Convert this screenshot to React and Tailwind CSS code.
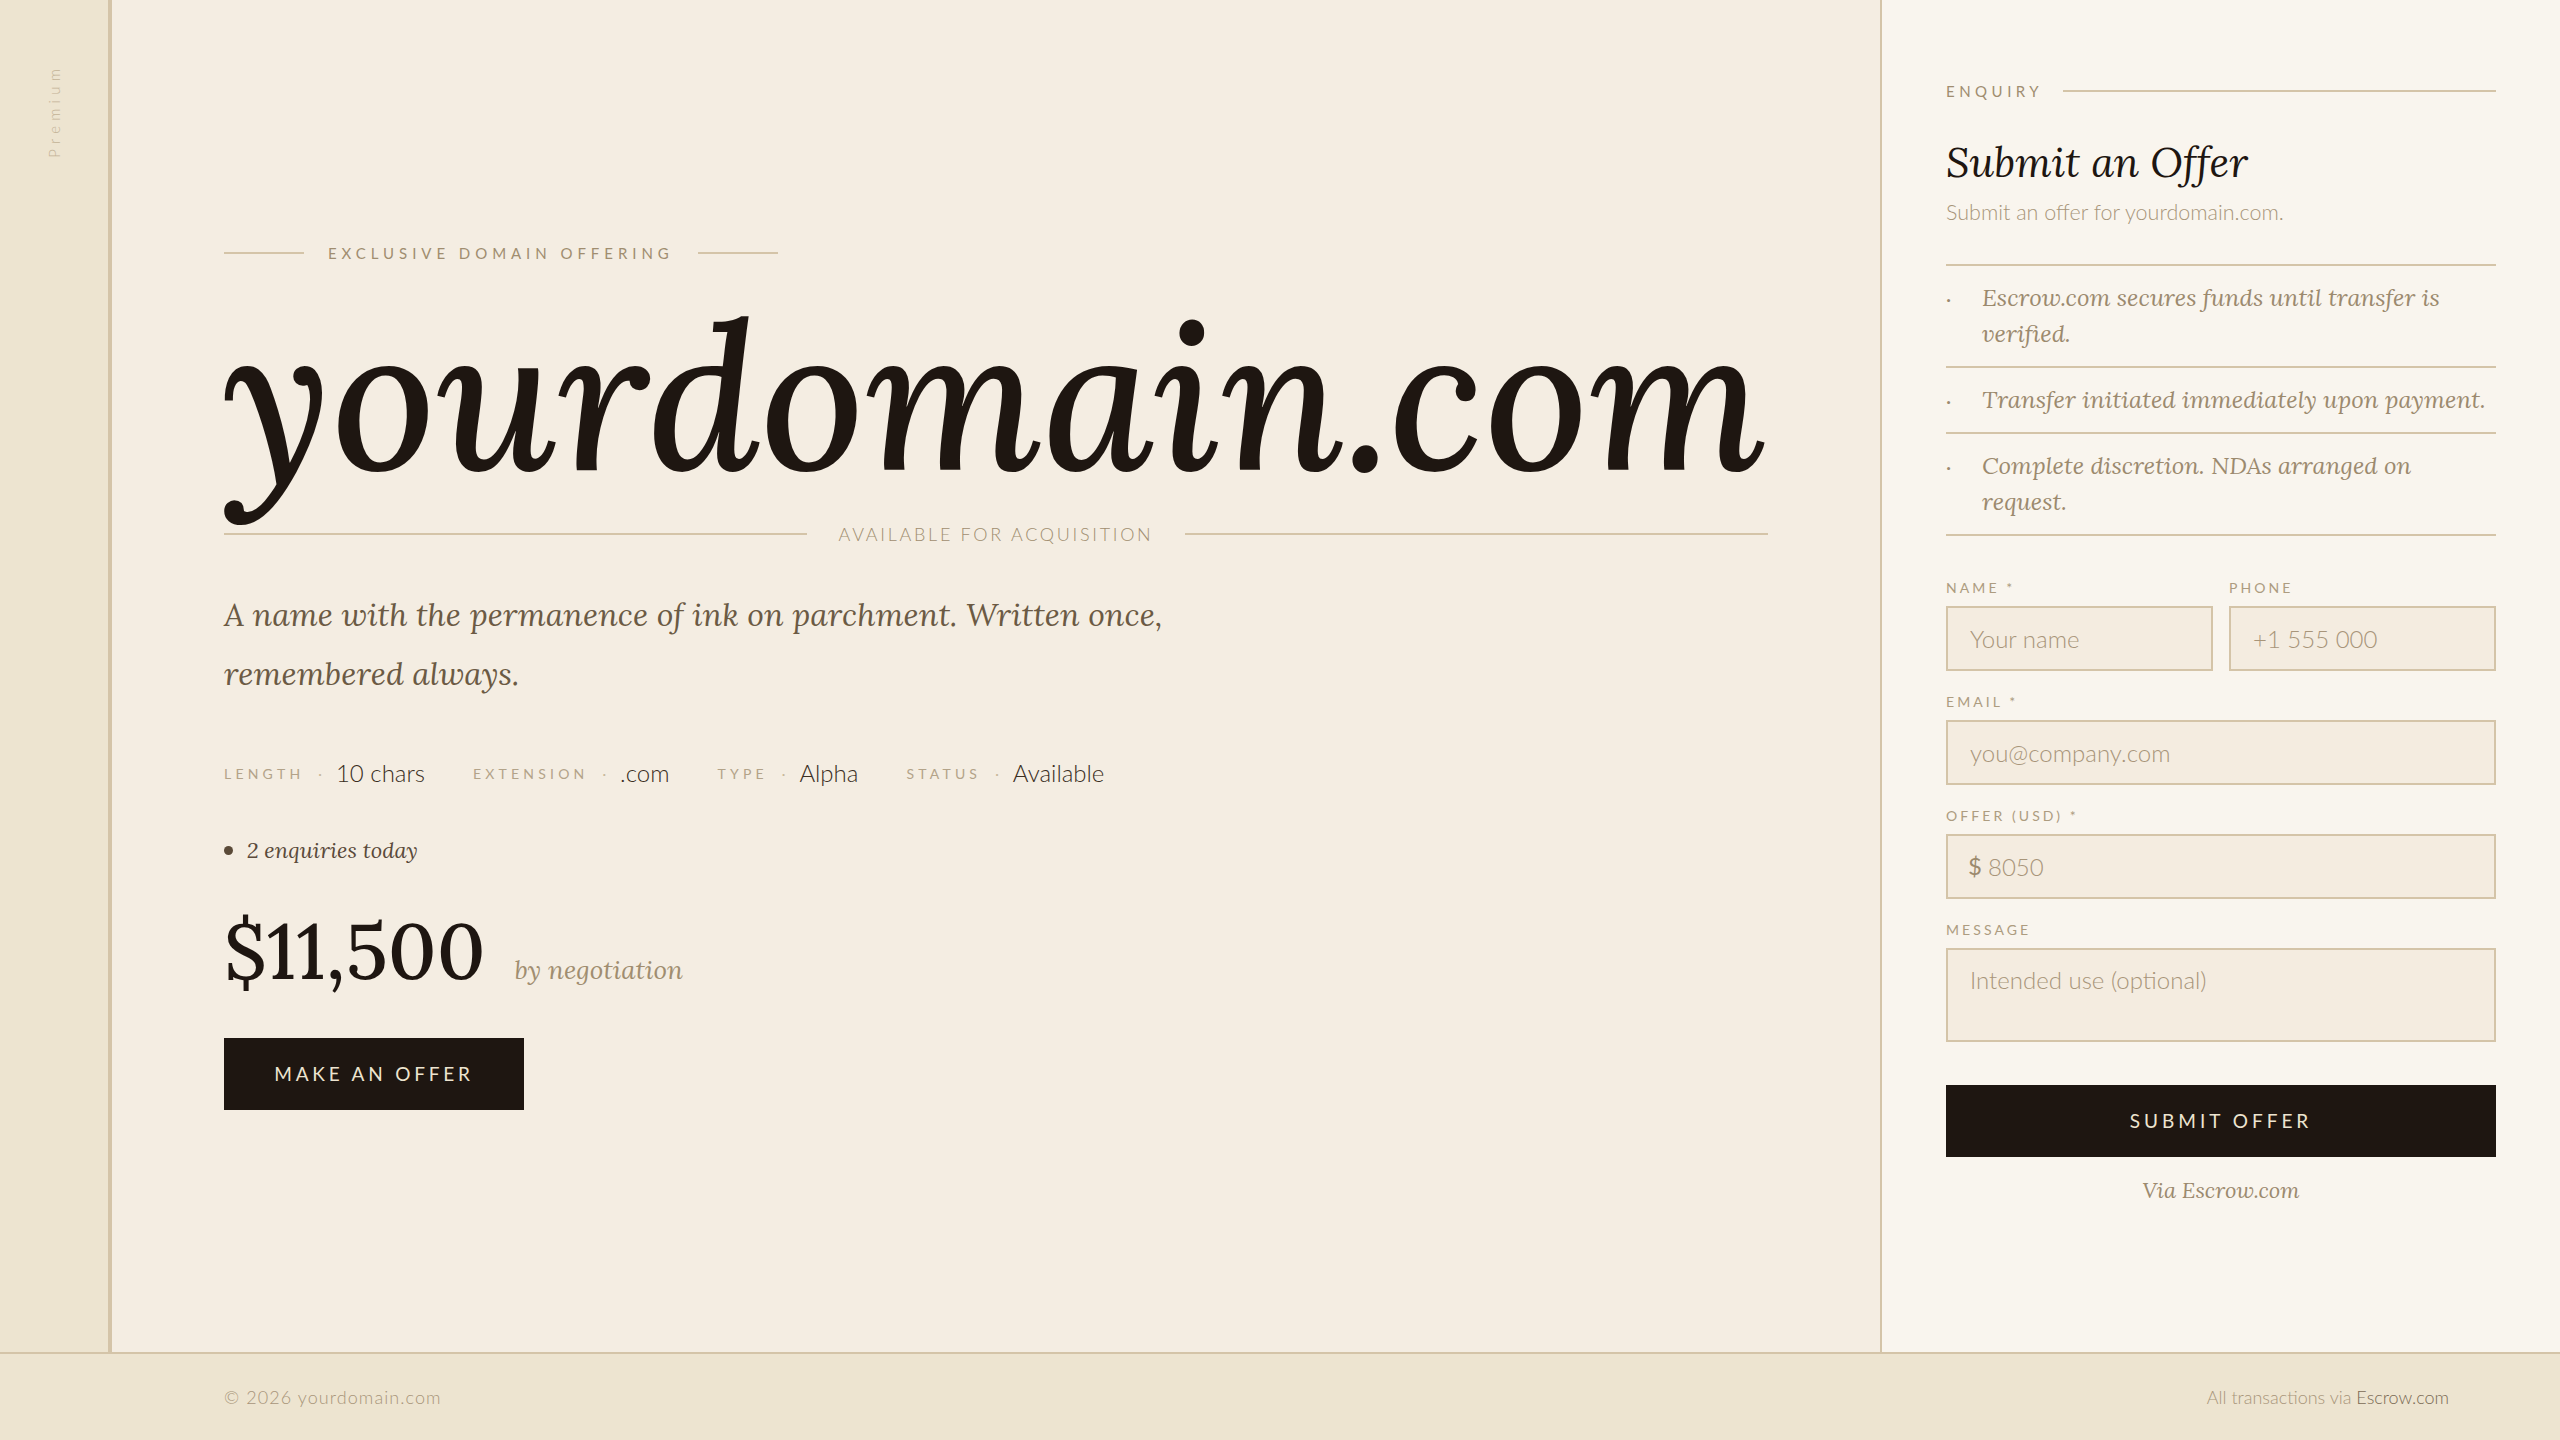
const serif = "font-['Lora','Liberation_Serif',serif]";

function MetaItem({ label, value }) {
  return (
    <div className="flex items-center gap-[14px]">
      <span className="text-[14px] tracking-[0.3em] text-[#b3a389]">{label}</span>
      <span className="text-[14px] text-[#c8b89c]">·</span>
      <span className="text-[24px] font-light text-[#3a2e22]">{value}</span>
    </div>
  );
}

function Label({ children }) {
  return (
    <div className="mb-[8px] text-[14px] leading-[20px] tracking-[0.22em] text-[#ad9c80]">{children}</div>
  );
}

const inputCls =
  "block h-[65px] w-full border-2 border-[#d4c4a8] bg-[#f4ece0] px-[22px] text-[24px] font-light text-[#3a2e22] outline-none placeholder:text-[#a8957a]";

export default function App() {
  return (
    <div className="flex h-[1440px] w-[2560px] flex-col overflow-hidden bg-[#f4ede2] font-['Lato',sans-serif]">
      <div className="flex min-h-0 flex-1">
        <aside className="flex w-[112px] shrink-0 flex-col items-center border-r-4 border-[#d4c4a8] bg-[#ede4d0] pt-[64px]">
          <span className="rotate-180 text-[15px] font-light tracking-[0.35em] text-[#c3b397] [writing-mode:vertical-rl]">
            Premium
          </span>
        </aside>

        <main className="flex min-w-0 flex-1 flex-col justify-center px-[112px]">
          <div className="flex items-center gap-[24px]">
            <div className="h-[2px] w-[80px] bg-[#d4c4a8]" />
            <span className="text-[15px] leading-[22px] tracking-[0.33em] text-[#a08d70]">EXCLUSIVE DOMAIN OFFERING</span>
            <div className="h-[2px] w-[80px] bg-[#d4c4a8]" />
          </div>

          <h1 className={`${serif} mt-[31px] whitespace-nowrap text-[202.5px] font-medium italic leading-none text-[#1e1611]`}>
            yourdomain.com
          </h1>

          <div className="mt-[26px] flex items-center gap-[32px]">
            <div className="h-[2px] flex-1 bg-[#d4c4a8]" />
            <span className="text-[18px] font-light leading-[22px] tracking-[0.15em] text-[#a08d70]">AVAILABLE FOR ACQUISITION</span>
            <div className="h-[2px] flex-1 bg-[#d4c4a8]" />
          </div>

          <p className={`${serif} mt-[40px] max-w-[1000px] text-[32px] italic leading-[59px] text-[#6b5a44]`}>
            A name with the permanence of ink on parchment. Written once, remembered always.
          </p>

          <div className="mt-[52px] flex items-center gap-[48px]">
            <MetaItem label="LENGTH" value="10 chars" />
            <MetaItem label="EXTENSION" value=".com" />
            <MetaItem label="TYPE" value="Alpha" />
            <MetaItem label="STATUS" value="Available" />
          </div>

          <div className="mt-[44px] flex items-center gap-[14px]">
            <span className="h-[9px] w-[9px] rounded-full bg-[#5a4a38]" />
            <span className={`${serif} text-[22px] italic leading-[30px] text-[#5a4a3a]`}>2 enquiries today</span>
          </div>

          <div className="mt-[47px] flex items-baseline gap-[29px]">
            <span className={`${serif} text-[78px] font-medium leading-none text-[#1e1611]`}>$11,500</span>
            <span className={`${serif} text-[26px] italic text-[#a08d70]`}>by negotiation</span>
          </div>

          <button className="mt-[48px] flex h-[72px] w-[300px] items-center justify-center bg-[#1e1611] text-[19px] tracking-[0.2em] text-[#ede4d0]">
            MAKE AN OFFER
          </button>
        </main>

        <section className="w-[680px] shrink-0 border-l-2 border-[#d4c4a8] bg-[#f9f5ee] px-[64px] pt-[80px]">
          <div className="flex items-center gap-[20px]">
            <span className="text-[15px] leading-[22px] tracking-[0.3em] text-[#a08d70]">ENQUIRY</span>
            <div className="h-[2px] flex-1 bg-[#d4c4a8]" />
          </div>

          <h2 className={`${serif} mt-[35px] text-[41.5px] italic leading-[1.2] text-[#1e1611]`}>Submit an Offer</h2>
          <p className="mt-[11px] text-[21.5px] font-light leading-[28px] text-[#a8957a]">Submit an offer for yourdomain.com.</p>

          <ul className="mt-[38px] border-t-2 border-[#d4c4a8]">
            {[
              "Escrow.com secures funds until transfer is verified.",
              "Transfer initiated immediately upon payment.",
              "Complete discretion. NDAs arranged on request.",
            ].map((t) => (
              <li key={t} className="flex border-b-2 border-[#d4c4a8] py-[14px]">
                <span className="w-[36px] shrink-0 text-[20px] leading-[36px] text-[#9c8a6e]">·</span>
                <span className={`${serif} text-[24px] italic leading-[36px] text-[#9c8a6e]`}>{t}</span>
              </li>
            ))}
          </ul>

          <form className="mt-[42px] flex flex-col gap-[21px]" onSubmit={(e) => e.preventDefault()}>
            <div className="grid grid-cols-2 gap-[16px]">
              <div>
                <Label>NAME *</Label>
                <input className={inputCls} placeholder="Your name" />
              </div>
              <div>
                <Label>PHONE</Label>
                <input className={inputCls} placeholder="+1 555 000" />
              </div>
            </div>
            <div>
              <Label>EMAIL *</Label>
              <input className={inputCls} placeholder="you@company.com" />
            </div>
            <div>
              <Label>OFFER (USD) *</Label>
              <div className="relative">
                <span className="absolute left-[22px] top-1/2 -translate-y-1/2 text-[24px] text-[#9c8a6e]">$</span>
                <input className={`${inputCls} pl-[40px]`} placeholder="8050" />
              </div>
            </div>
            <div>
              <Label>MESSAGE</Label>
              <textarea
                className="block h-[94px] w-full resize-none border-2 border-[#d4c4a8] bg-[#f4ece0] px-[22px] pt-[13px] text-[24px] font-light leading-[33px] text-[#3a2e22] outline-none placeholder:text-[#a8957a]"
                placeholder="Intended use (optional)"
              />
            </div>
            <button className="mt-[22px] flex h-[72px] w-full items-center justify-center bg-[#1e1611] text-[19px] tracking-[0.21em] text-[#ede4d0]">
              SUBMIT OFFER
            </button>
          </form>

          <p className={`${serif} mt-[17px] text-center text-[22px] italic leading-[32px] text-[#9c8a6e]`}>Via Escrow.com</p>
        </section>
      </div>

      <footer className="flex h-[88px] shrink-0 items-center justify-between border-t-2 border-[#d4c4a8] bg-[#ede4d0] pl-[224px] pr-[111px]">
        <span className="text-[18px] font-light tracking-[0.06em] text-[#a8957a]">© 2026 yourdomain.com</span>
        <span className="text-[18px] font-light text-[#a8957a]">
          All transactions via <span className="text-[#7a6a54]">Escrow.com</span>
        </span>
      </footer>
    </div>
  );
}
